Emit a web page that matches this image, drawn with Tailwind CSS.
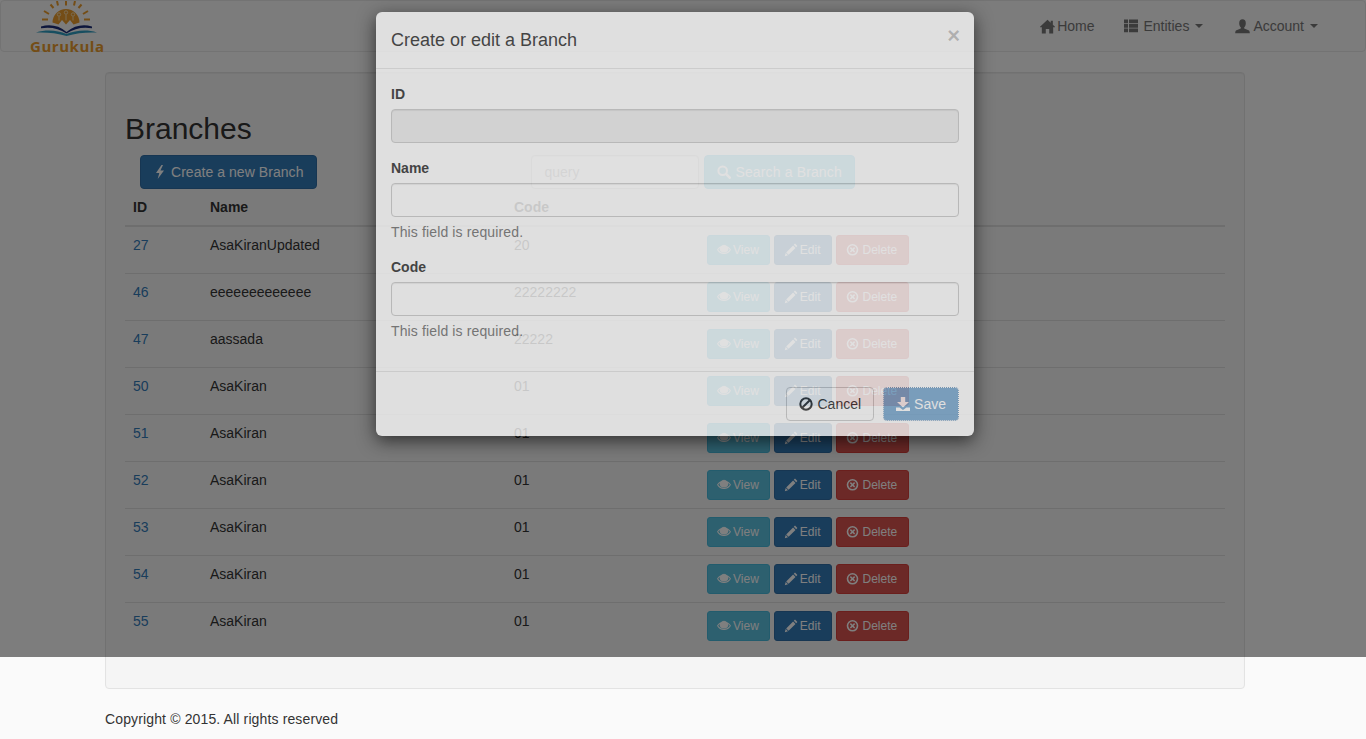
<!doctype html>
<html lang="en">
<head>
<meta charset="utf-8">
<title>Branches</title>
<script src="https://cdn.jsdelivr.net/npm/@tailwindcss/browser@4"></script>
</head>
<body class="m-0">
<svg class="hidden" aria-hidden="true">
  <symbol id="i-home" viewBox="0 0 14 14"><path fill="currentColor" d="M7 .6 L10 3.400 V1.600 H12 V5.300 L14.300 7.600 H12.300 V13.500 H8.600 V9.300 H5.400 V13.500 H1.700 V7.600 H-.3 Z"/></symbol>
  <symbol id="i-list" viewBox="0 0 14 14"><path fill="currentColor" d="M0 .6h4V4.200H0zM5 .6h9V4.200H5zM0 5.100h4V8.700H0zM5 5.100h9V8.700H5zM0 9.600h4v3.600H0zM5 9.600h9v3.600H5z"/></symbol>
  <symbol id="i-user" viewBox="0 0 14 14"><path fill="currentColor" d="M7 .3c2 0 3.100 1.500 3.100 3.600 0 1.700-.7 3.200-1.500 3.900v1.100l4 1.600c.8.3 1.200 1 1.200 2.800H.2c0-1.800.4-2.500 1.200-2.800l4-1.600V7.800c-.8-.7-1.500-2.200-1.500-3.900C3.900 1.800 5 .3 7 .3z"/></symbol>
  <symbol id="i-flash" viewBox="0 0 14 14"><path fill="currentColor" d="M8.500 0 3 8h3.300L4.700 14 11 5.500H7.400L10 0z"/></symbol>
  <symbol id="i-search" viewBox="0 0 14 14"><circle cx="5.700" cy="5.700" r="4.300" fill="none" stroke="currentColor" stroke-width="2"/><path stroke="currentColor" stroke-width="2.600" stroke-linecap="round" d="M9.200 9.200l3.500 3.500"/></symbol>
  <symbol id="i-eye" viewBox="0 0 14 14"><path fill="currentColor" fill-rule="evenodd" d="M7 2.500c3 0 5.600 1.700 7 4.300-1.400 2.600-4 4.300-7 4.300S1.400 9.400 0 6.800C1.400 4.200 4 2.500 7 2.500zM2.800 5C2.100 5.500 1.600 6.100 1.200 6.800 2.500 8.800 4.600 10 7 10s4.500-1.200 5.800-3.200c-.4-.7-.9-1.300-1.600-1.800.8 2.600-1.400 4.500-4.200 4.500S2 7.600 2.800 5z"/><path fill="currentColor" d="M4 3.800A3.300 3.300 0 0 1 10 3.800 3.200 3.200 0 1 1 4 3.800z" opacity=".9"/><circle cx="6" cy="5" r="1.100" fill="#fff" opacity=".55"/></symbol>
  <symbol id="i-pencil" viewBox="0 0 14 14"><path fill="currentColor" d="M11 .6 13.400 3 12.200 4.200 9.800 1.800zM9.100 2.500 11.500 4.900 4.600 11.800 2.200 9.400zM1.700 10 4 12.300.8 13.200z"/></symbol>
  <symbol id="i-x" viewBox="0 0 14 14"><path fill="currentColor" fill-rule="evenodd" d="M6.500 1a5.800 5.800 0 1 1 0 11.600A5.800 5.800 0 0 1 6.500 1zM6.500 2.600a4.200 4.200 0 1 0 0 8.400 4.200 4.200 0 0 0 0-8.400zM4.900 4.100 6.500 5.700 8.100 4.100l1.100 1.100-1.600 1.600 1.600 1.600-1.100 1.100-1.600-1.600-1.600 1.600-1.100-1.100 1.600-1.600-1.600-1.600z"/></symbol>
  <symbol id="i-ban" viewBox="0 0 14 14"><circle cx="7" cy="7" r="5.700" fill="none" stroke="currentColor" stroke-width="2"/><path stroke="currentColor" stroke-width="2" d="M3.200 10.800 10.800 3.200"/></symbol>
  <symbol id="i-save" viewBox="0 0 14 14"><path fill="currentColor" d="M4.800 0h4.400v5H13L7 10.500 1 5h3.800zM0 10.500h3.600L7 13l3.400-2.500H14V14H0z"/></symbol>
</svg>

<div class="relative h-[739px] w-[1366px] overflow-hidden bg-[#fafafa] font-['Liberation_Sans',Arial,sans-serif] text-[14px] leading-[20px] text-[#333]">

  <nav class="flex h-[52px] items-center justify-between rounded-[4px] border border-[#e7e7e7] bg-[#f8f8f8] pr-[32px] text-[#777]">
    <a class="relative ml-[29px] flex h-[50px] w-[76px] flex-col items-center">
      <svg class="block h-[40px] w-[76px] shrink-0" viewBox="0 0 76 40">
        <g fill="none" stroke="#e89b2d" stroke-width="2">
          <path d="M27 0l1 4.500M36 -1v5.500M45 0l-1 4.500M20.500 3.500l3 3.500M51.500 3.500l-3 3.500M14 10l5 3M58 10l-5 3M12 18.500h6M60 18.500h-6"/>
        </g>
        <path fill="#e89b2d" d="M22.500 21.500a13.500 13.500 0 0 1 27 0l-6 2-3.500-4.500-4 4.500-4-4.500-3.500 4.500z"/>
        <g fill="none" stroke="#f5d9a8" stroke-width="1"><circle cx="29" cy="13.500" r="1.700"/><circle cx="36" cy="11.500" r="1.700"/><circle cx="43" cy="13.500" r="1.700"/><path d="M29 15.500v4M36 13.500v6M43 15.500v4"/></g>
        <path fill="#1b2d78" d="M11 25.500c9-2.500 18-1 25.500 5.500 8-6.500 16.500-8 25.500-5.500v1.800c-9-1.500-17.500 0-25.500 5.200-7.500-5.200-16.500-6.700-25.500-5.200z"/>
        <path fill="#2f9cc0" d="M6 31.500c11-3.500 22-2 30.500 1.500 9-3.500 20-5 30.500-1.500-10-.5-20.500.5-30.500 3.500-9.500-3-20.500-4-30.500-3.500z"/>
      </svg>
      <span class="absolute top-[35px] left-0 font-['Open_Sans',sans-serif] text-[15px] leading-[20px] font-bold tracking-[.55px] whitespace-nowrap text-[#e89b2d]">Gurukula</span>
    </a>
    <div class="flex">
      <a class="flex items-center px-[15px]"><svg class="mr-[2px] size-[15px]"><use href="#i-home"/></svg>Home</a>
      <a class="flex items-center px-[15px]"><svg class="mr-[5px] size-[14px]"><use href="#i-list"/></svg>Entities<span class="ml-[6px] h-0 w-0 border-x-[4px] border-t-[4px] border-x-transparent border-t-[#777]"></span></a>
      <a class="ml-[2px] flex items-center px-[15px]"><svg class="mr-[3px] size-[15px]"><use href="#i-user"/></svg>Account<span class="ml-[6px] h-0 w-0 border-x-[4px] border-t-[4px] border-x-transparent border-t-[#777]"></span></a>
    </div>
  </nav>

  <main class="mt-[20px] ml-[105px] w-[1140px] rounded-[4px] border border-[#e3e3e3] bg-[#f5f5f5] p-[19px] shadow-[inset_0_1px_1px_rgba(0,0,0,.05)]">
    <h2 class="mt-[20px] mb-[10px] text-[30px] leading-[33px] font-medium text-[#333]">Branches</h2>
    <div class="flex h-[34px]">
      <button class="ml-[15px] flex items-center gap-[4px] rounded-[4px] border border-[#2e6da4] bg-[#337ab7] pr-[13px] pl-[12px] tracking-[.05px] text-white"><svg class="size-[14px]"><use href="#i-flash"/></svg>Create a new Branch</button>
      <input class="ml-[214px] w-[168px] rounded-[4px] border border-[#ccc] bg-white px-[12px] text-[14px] text-[#555] shadow-[inset_0_1px_1px_rgba(0,0,0,.075)] placeholder:text-[#999]" placeholder="query">
      <button class="ml-[5px] flex items-center gap-[4px] rounded-[4px] border border-[#46b8da] bg-[#5bc0de] px-[12px] tracking-[.14px] text-white"><svg class="size-[14px]"><use href="#i-search"/></svg>Search a Branch</button>
    </div>
    <table class="mb-[20px] w-[1100px] table-fixed border-collapse">
      <colgroup><col class="w-[77px]"><col class="w-[304px]"><col class="w-[193px]"><col></colgroup>
      <thead>
        <tr class="border-b-2 border-[#ddd] text-left">
          <th class="p-[8px] font-bold">ID</th><th class="p-[8px] font-bold">Name</th><th class="p-[8px] font-bold">Code</th><th class="p-[8px]"></th>
        </tr>
      </thead>
      <tbody>
        <tr class="border-t border-[#ddd]"><td class="p-[8px] align-top text-[#337ab7]">27</td><td class="p-[8px] align-top">AsaKiranUpdated</td><td class="p-[8px] align-top">20</td><td class="p-[8px] align-top"><div class="flex gap-[4px] text-[12px] leading-[18px] text-white"><button class="flex h-[30px] items-center gap-[2px] rounded-[3px] border border-[#46b8da] bg-[#5bc0de] px-[10px]"><svg class="-ml-[1px] size-[14px]"><use href="#i-eye"/></svg>View</button><button class="flex h-[30px] items-center gap-[2px] rounded-[3px] border border-[#2e6da4] bg-[#337ab7] pr-[11px] pl-[10px]"><svg class="-ml-[1px] size-[14px]"><use href="#i-pencil"/></svg>Edit</button><button class="flex h-[30px] items-center gap-[2px] rounded-[3px] border border-[#d43f3a] bg-[#d9534f] pr-[11px] pl-[10px]"><svg class="-ml-[1px] size-[14px]"><use href="#i-x"/></svg>Delete</button></div></td></tr>
        <tr class="border-t border-[#ddd]"><td class="p-[8px] align-top text-[#337ab7]">46</td><td class="p-[8px] align-top">eeeeeeeeeeeee</td><td class="p-[8px] align-top">22222222</td><td class="p-[8px] align-top"><div class="flex gap-[4px] text-[12px] leading-[18px] text-white"><button class="flex h-[30px] items-center gap-[2px] rounded-[3px] border border-[#46b8da] bg-[#5bc0de] px-[10px]"><svg class="-ml-[1px] size-[14px]"><use href="#i-eye"/></svg>View</button><button class="flex h-[30px] items-center gap-[2px] rounded-[3px] border border-[#2e6da4] bg-[#337ab7] pr-[11px] pl-[10px]"><svg class="-ml-[1px] size-[14px]"><use href="#i-pencil"/></svg>Edit</button><button class="flex h-[30px] items-center gap-[2px] rounded-[3px] border border-[#d43f3a] bg-[#d9534f] pr-[11px] pl-[10px]"><svg class="-ml-[1px] size-[14px]"><use href="#i-x"/></svg>Delete</button></div></td></tr>
        <tr class="border-t border-[#ddd]"><td class="p-[8px] align-top text-[#337ab7]">47</td><td class="p-[8px] align-top">aassada</td><td class="p-[8px] align-top">22222</td><td class="p-[8px] align-top"><div class="flex gap-[4px] text-[12px] leading-[18px] text-white"><button class="flex h-[30px] items-center gap-[2px] rounded-[3px] border border-[#46b8da] bg-[#5bc0de] px-[10px]"><svg class="-ml-[1px] size-[14px]"><use href="#i-eye"/></svg>View</button><button class="flex h-[30px] items-center gap-[2px] rounded-[3px] border border-[#2e6da4] bg-[#337ab7] pr-[11px] pl-[10px]"><svg class="-ml-[1px] size-[14px]"><use href="#i-pencil"/></svg>Edit</button><button class="flex h-[30px] items-center gap-[2px] rounded-[3px] border border-[#d43f3a] bg-[#d9534f] pr-[11px] pl-[10px]"><svg class="-ml-[1px] size-[14px]"><use href="#i-x"/></svg>Delete</button></div></td></tr>
        <tr class="border-t border-[#ddd]"><td class="p-[8px] align-top text-[#337ab7]">50</td><td class="p-[8px] align-top">AsaKiran</td><td class="p-[8px] align-top">01</td><td class="p-[8px] align-top"><div class="flex gap-[4px] text-[12px] leading-[18px] text-white"><button class="flex h-[30px] items-center gap-[2px] rounded-[3px] border border-[#46b8da] bg-[#5bc0de] px-[10px]"><svg class="-ml-[1px] size-[14px]"><use href="#i-eye"/></svg>View</button><button class="flex h-[30px] items-center gap-[2px] rounded-[3px] border border-[#2e6da4] bg-[#337ab7] pr-[11px] pl-[10px]"><svg class="-ml-[1px] size-[14px]"><use href="#i-pencil"/></svg>Edit</button><button class="flex h-[30px] items-center gap-[2px] rounded-[3px] border border-[#d43f3a] bg-[#d9534f] pr-[11px] pl-[10px]"><svg class="-ml-[1px] size-[14px]"><use href="#i-x"/></svg>Delete</button></div></td></tr>
        <tr class="border-t border-[#ddd]"><td class="p-[8px] align-top text-[#337ab7]">51</td><td class="p-[8px] align-top">AsaKiran</td><td class="p-[8px] align-top">01</td><td class="p-[8px] align-top"><div class="flex gap-[4px] text-[12px] leading-[18px] text-white"><button class="flex h-[30px] items-center gap-[2px] rounded-[3px] border border-[#46b8da] bg-[#5bc0de] px-[10px]"><svg class="-ml-[1px] size-[14px]"><use href="#i-eye"/></svg>View</button><button class="flex h-[30px] items-center gap-[2px] rounded-[3px] border border-[#2e6da4] bg-[#337ab7] pr-[11px] pl-[10px]"><svg class="-ml-[1px] size-[14px]"><use href="#i-pencil"/></svg>Edit</button><button class="flex h-[30px] items-center gap-[2px] rounded-[3px] border border-[#d43f3a] bg-[#d9534f] pr-[11px] pl-[10px]"><svg class="-ml-[1px] size-[14px]"><use href="#i-x"/></svg>Delete</button></div></td></tr>
        <tr class="border-t border-[#ddd]"><td class="p-[8px] align-top text-[#337ab7]">52</td><td class="p-[8px] align-top">AsaKiran</td><td class="p-[8px] align-top">01</td><td class="p-[8px] align-top"><div class="flex gap-[4px] text-[12px] leading-[18px] text-white"><button class="flex h-[30px] items-center gap-[2px] rounded-[3px] border border-[#46b8da] bg-[#5bc0de] px-[10px]"><svg class="-ml-[1px] size-[14px]"><use href="#i-eye"/></svg>View</button><button class="flex h-[30px] items-center gap-[2px] rounded-[3px] border border-[#2e6da4] bg-[#337ab7] pr-[11px] pl-[10px]"><svg class="-ml-[1px] size-[14px]"><use href="#i-pencil"/></svg>Edit</button><button class="flex h-[30px] items-center gap-[2px] rounded-[3px] border border-[#d43f3a] bg-[#d9534f] pr-[11px] pl-[10px]"><svg class="-ml-[1px] size-[14px]"><use href="#i-x"/></svg>Delete</button></div></td></tr>
        <tr class="border-t border-[#ddd]"><td class="p-[8px] align-top text-[#337ab7]">53</td><td class="p-[8px] align-top">AsaKiran</td><td class="p-[8px] align-top">01</td><td class="p-[8px] align-top"><div class="flex gap-[4px] text-[12px] leading-[18px] text-white"><button class="flex h-[30px] items-center gap-[2px] rounded-[3px] border border-[#46b8da] bg-[#5bc0de] px-[10px]"><svg class="-ml-[1px] size-[14px]"><use href="#i-eye"/></svg>View</button><button class="flex h-[30px] items-center gap-[2px] rounded-[3px] border border-[#2e6da4] bg-[#337ab7] pr-[11px] pl-[10px]"><svg class="-ml-[1px] size-[14px]"><use href="#i-pencil"/></svg>Edit</button><button class="flex h-[30px] items-center gap-[2px] rounded-[3px] border border-[#d43f3a] bg-[#d9534f] pr-[11px] pl-[10px]"><svg class="-ml-[1px] size-[14px]"><use href="#i-x"/></svg>Delete</button></div></td></tr>
        <tr class="border-t border-[#ddd]"><td class="p-[8px] align-top text-[#337ab7]">54</td><td class="p-[8px] align-top">AsaKiran</td><td class="p-[8px] align-top">01</td><td class="p-[8px] align-top"><div class="flex gap-[4px] text-[12px] leading-[18px] text-white"><button class="flex h-[30px] items-center gap-[2px] rounded-[3px] border border-[#46b8da] bg-[#5bc0de] px-[10px]"><svg class="-ml-[1px] size-[14px]"><use href="#i-eye"/></svg>View</button><button class="flex h-[30px] items-center gap-[2px] rounded-[3px] border border-[#2e6da4] bg-[#337ab7] pr-[11px] pl-[10px]"><svg class="-ml-[1px] size-[14px]"><use href="#i-pencil"/></svg>Edit</button><button class="flex h-[30px] items-center gap-[2px] rounded-[3px] border border-[#d43f3a] bg-[#d9534f] pr-[11px] pl-[10px]"><svg class="-ml-[1px] size-[14px]"><use href="#i-x"/></svg>Delete</button></div></td></tr>
        <tr class="border-t border-[#ddd]"><td class="p-[8px] align-top text-[#337ab7]">55</td><td class="p-[8px] align-top">AsaKiran</td><td class="p-[8px] align-top">01</td><td class="p-[8px] align-top"><div class="flex gap-[4px] text-[12px] leading-[18px] text-white"><button class="flex h-[30px] items-center gap-[2px] rounded-[3px] border border-[#46b8da] bg-[#5bc0de] px-[10px]"><svg class="-ml-[1px] size-[14px]"><use href="#i-eye"/></svg>View</button><button class="flex h-[30px] items-center gap-[2px] rounded-[3px] border border-[#2e6da4] bg-[#337ab7] pr-[11px] pl-[10px]"><svg class="-ml-[1px] size-[14px]"><use href="#i-pencil"/></svg>Edit</button><button class="flex h-[30px] items-center gap-[2px] rounded-[3px] border border-[#d43f3a] bg-[#d9534f] pr-[11px] pl-[10px]"><svg class="-ml-[1px] size-[14px]"><use href="#i-x"/></svg>Delete</button></div></td></tr>
      </tbody>
    </table>
  </main>

  <footer class="mt-[20px] ml-[105px] tracking-[.135px]"><p>Copyright © 2015. All rights reserved</p></footer>

  <div class="absolute top-0 left-0 h-[657px] w-full bg-black/50"></div>

  <div class="absolute top-[12px] left-[376px] h-[424px] w-[598px] rounded-[6px] bg-white opacity-[.76] shadow-[0_5px_18px_rgba(0,0,0,.8)]">
    <div class="relative h-[57px] border-b border-[#e5e5e5] p-[15px]">
      <h4 class="text-[18px] leading-[26px] font-medium text-[#333]">Create or edit a Branch</h4>
      <span class="absolute top-[13px] right-[14px] text-[22px] leading-[21px] font-bold text-black/25">×</span>
    </div>
    <form class="flex flex-col p-[15px]">
      <label class="mb-[5px] font-bold">ID</label>
      <input disabled class="mb-[15px] h-[34px] w-full rounded-[4px] border border-[#ccc] bg-[#eee] shadow-[inset_0_1px_1px_rgba(0,0,0,.075)]">
      <label class="mb-[5px] font-bold">Name</label>
      <input class="h-[34px] w-full rounded-[4px] border border-[#ccc] bg-white shadow-[inset_0_1px_1px_rgba(0,0,0,.075)]">
      <p class="mt-[5px] mb-[15px] tracking-[.13px] text-[#737373]">This field is required.</p>
      <label class="mb-[5px] font-bold">Code</label>
      <input class="h-[34px] w-full rounded-[4px] border border-[#ccc] bg-white shadow-[inset_0_1px_1px_rgba(0,0,0,.075)]">
      <p class="mt-[5px] mb-[15px] tracking-[.13px] text-[#737373]">This field is required.</p>
    </form>
    <div class="flex justify-end gap-[9px] border-t border-[#e5e5e5] p-[15px]">
      <button class="flex h-[34px] items-center gap-[4px] rounded-[4px] border border-[#ccc] bg-white px-[12px] text-[#333]"><svg class="size-[14px]"><use href="#i-ban"/></svg>Cancel</button>
      <button class="flex h-[34px] items-center gap-[4px] rounded-[4px] border border-[#2e6da4] bg-[#337ab7] px-[12px] text-white opacity-65 outline-1 outline-offset-[-1px] outline-white outline-dotted"><svg class="size-[14px]"><use href="#i-save"/></svg>Save</button>
    </div>
  </div>
</div>
</body>
</html>
